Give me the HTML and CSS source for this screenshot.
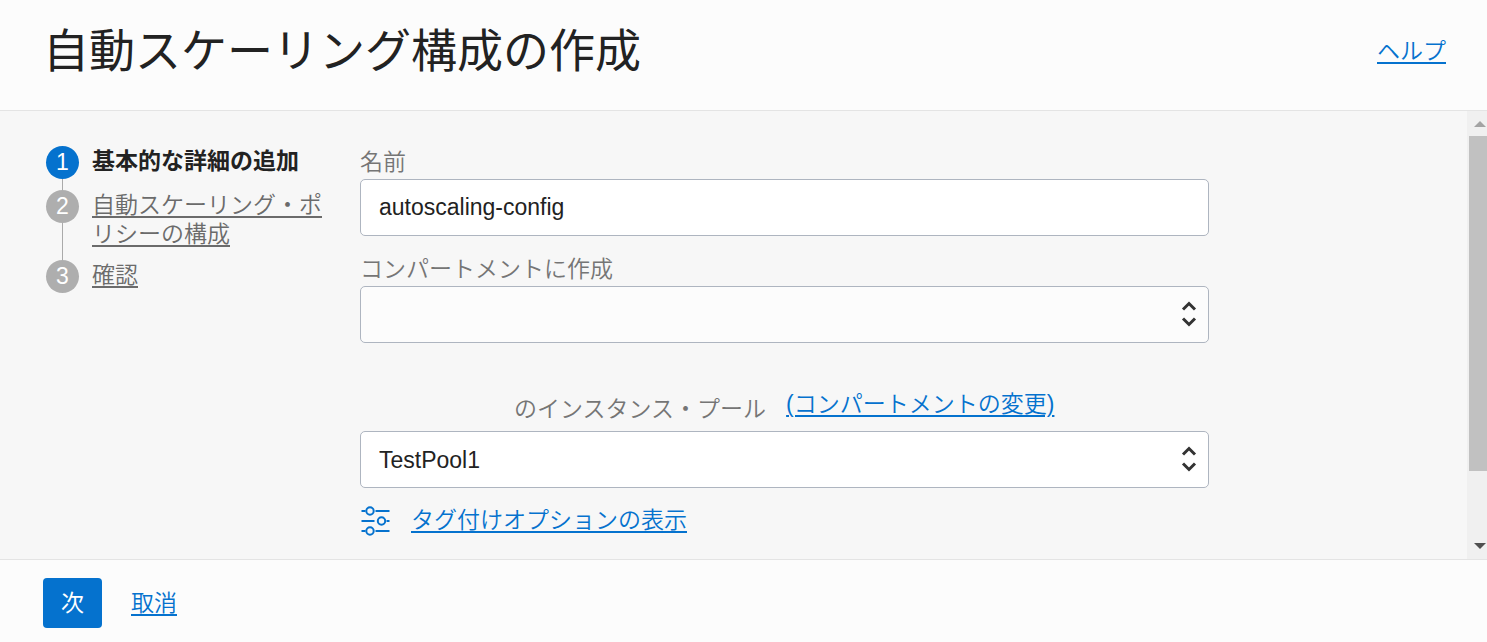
FILE: index.html
```html
<!DOCTYPE html>
<html lang="ja">
<head>
<meta charset="utf-8">
<meta name="viewport" content="width=device-width, initial-scale=1">
<title>自動スケーリング構成の作成</title>
<link rel="stylesheet" href="styles.css">
</head>
<body>
<header class="header">
  <h1 class="title">自動スケーリング構成の作成</h1>
  <a class="link" href="#">ヘルプ</a>
</header>
<div class="middle">
  <main class="content">
    <ol class="steps">
      <li class="step current"><span class="marker">1</span><strong class="step-text" aria-current="step">基本的な詳細の追加</strong></li>
      <li class="step"><span class="marker">2</span><a class="step-text" href="#">自動スケーリング・ポリシーの構成</a></li>
      <li class="step"><span class="marker">3</span><a class="step-text" href="#">確認</a></li>
    </ol>
    <form class="form" id="config">
      <label class="label" for="name">名前</label>
      <input class="control" id="name" type="text" value="autoscaling-config">
      <label class="label next" for="compartment">コンパートメントに作成</label>
      <div class="picker">
        <select class="control muted" id="compartment"><option></option></select>
        <svg class="arrows" viewBox="0 0 16 26" aria-hidden="true"><path d="M2 8.500 8 2.500l6 6M2 17.500l6 6 6-6"/></svg>
      </div>
      <div class="pool-row">
        <label class="label" for="pool">のインスタンス・プール</label>
        <a class="link change" href="#">(コンパートメントの変更)</a>
      </div>
      <div class="picker">
        <select class="control" id="pool"><option>TestPool1</option></select>
        <svg class="arrows" viewBox="0 0 16 26" aria-hidden="true"><path d="M2 8.500 8 2.500l6 6M2 17.500l6 6 6-6"/></svg>
      </div>
      <div class="tags">
        <svg class="sliders" viewBox="0 0 30 30" aria-hidden="true"><path d="M1.500 5h4m10 0h14M1.500 15h13m12 0h3M1.500 25h4m10 0h14"/><circle cx="10" cy="5" r="3.700"/><circle cx="21.500" cy="15" r="3.700"/><circle cx="10" cy="25" r="3.700"/></svg>
        <a class="link" href="#">タグ付けオプションの表示</a>
      </div>
    </form>
  </main>
  <div class="scrollbar" aria-hidden="true">
    <svg class="scroll-arrow up" viewBox="0 0 12 6"><path d="M0 6 6 0l6 6z"/></svg>
    <div class="track"><div class="thumb"></div></div>
    <svg class="scroll-arrow down" viewBox="0 0 12 6"><path d="M0 0h12L6 6z"/></svg>
  </div>
</div>
<footer class="footer">
  <button class="next-button" type="submit" form="config">次</button>
  <a class="link" href="#">取消</a>
</footer>
</body>
</html>
```
FILE: styles.css
```css
* { box-sizing: border-box; }
body {
  margin: 0;
  min-height: 100vh;
  display: flex;
  flex-direction: column;
  background: #fcfcfc;
  color: #222;
  font: 350 23px/33px "Liberation Sans", "Noto Sans CJK JP", sans-serif;
}
.header {
  display: flex;
  align-items: center;
  justify-content: space-between;
  padding: 17px 41px 25px 43px;
  border-bottom: 1px solid #e4e4e4;
}
.title { margin: 0; font-size: 46px; line-height: 68px; font-weight: 400; }
.link {
  color: #0572ce;
  text-decoration: underline 2px;
  text-underline-offset: 3px;
}
.middle {
  flex: 1;
  display: flex;
  background: #f7f7f7;
}
.content {
  flex: 1;
  display: grid;
  grid-template-columns: 284px minmax(0, 849px);
  column-gap: 30px;
  align-content: start;
  padding: 35px 46px 20px;
}
.steps { margin: 0; padding: 0; list-style: none; }
.step {
  position: relative;
  display: flex;
  align-items: flex-start;
  gap: 13px;
  padding-bottom: 11px;
}
.step:not(:last-child)::before {
  content: "";
  position: absolute;
  top: 33px;
  bottom: 0;
  left: 16px;
  width: 1px;
  background: #aaa;
}
.marker {
  flex: none;
  width: 33px;
  height: 33px;
  border-radius: 50%;
  background: #aeaeae;
  color: #fff;
  font-weight: 400;
  text-align: center;
}
.current .marker { background: #0572ce; }
.step-text {
  padding-top: 1px;
  color: #6b6b6b;
  line-height: 29px;
  text-decoration: underline 2px;
  text-underline-offset: 3px;
}
.current .step-text { color: #222; font-weight: 700; text-decoration: none; }
.form { display: flex; flex-direction: column; }
.label { color: #757575; }
.next { margin-top: 17px; }
.control {
  display: block;
  width: 100%;
  height: 57px;
  margin: 0;
  padding: 0 18px;
  border: 1px solid #aeb5c0;
  border-radius: 5px;
  background: #fff;
  color: #222;
  font: 400 23px "Liberation Sans", "Noto Sans CJK JP", sans-serif;
  appearance: none;
}
.muted { background: #fcfcfc; }
.picker { position: relative; }
.arrows {
  position: absolute;
  top: 15px;
  right: 12px;
  width: 16px;
  height: 26px;
  fill: none;
  stroke: #333;
  stroke-width: 3;
  pointer-events: none;
}
.pool-row {
  display: flex;
  align-items: center;
  gap: 20px;
  height: 44px;
  margin-top: 44px;
  padding-left: 154px;
}
.change { align-self: flex-start; padding-top: 1px; }
.tags { display: flex; align-items: center; gap: 21px; margin-top: 16px; }
.sliders {
  width: 30px;
  height: 30px;
  fill: none;
  stroke: #0572ce;
  stroke-width: 2;
}
.scrollbar {
  width: 20px;
  display: flex;
  flex-direction: column;
  align-items: center;
  background: #f0f0f0;
  padding: 10px 0 10px 2px;
}
.scroll-arrow { width: 12px; height: 6px; margin-left: 3px; }
.up { fill: #a3a3a3; }
.down { fill: #505050; }
.track { flex: 1; align-self: stretch; margin: 9px 0 8px; }
.thumb { height: 84%; background: #c1c1c1; }
.footer {
  display: flex;
  align-items: center;
  gap: 29px;
  padding: 18px 43px 14px;
  border-top: 1px solid #e4e4e4;
}
.next-button {
  width: 59px;
  height: 50px;
  padding: 0 0 4px;
  border: 0;
  border-radius: 4px;
  background: #0572ce;
  color: #fff;
  font: 400 23px "Liberation Sans", "Noto Sans CJK JP", sans-serif;
}
```
